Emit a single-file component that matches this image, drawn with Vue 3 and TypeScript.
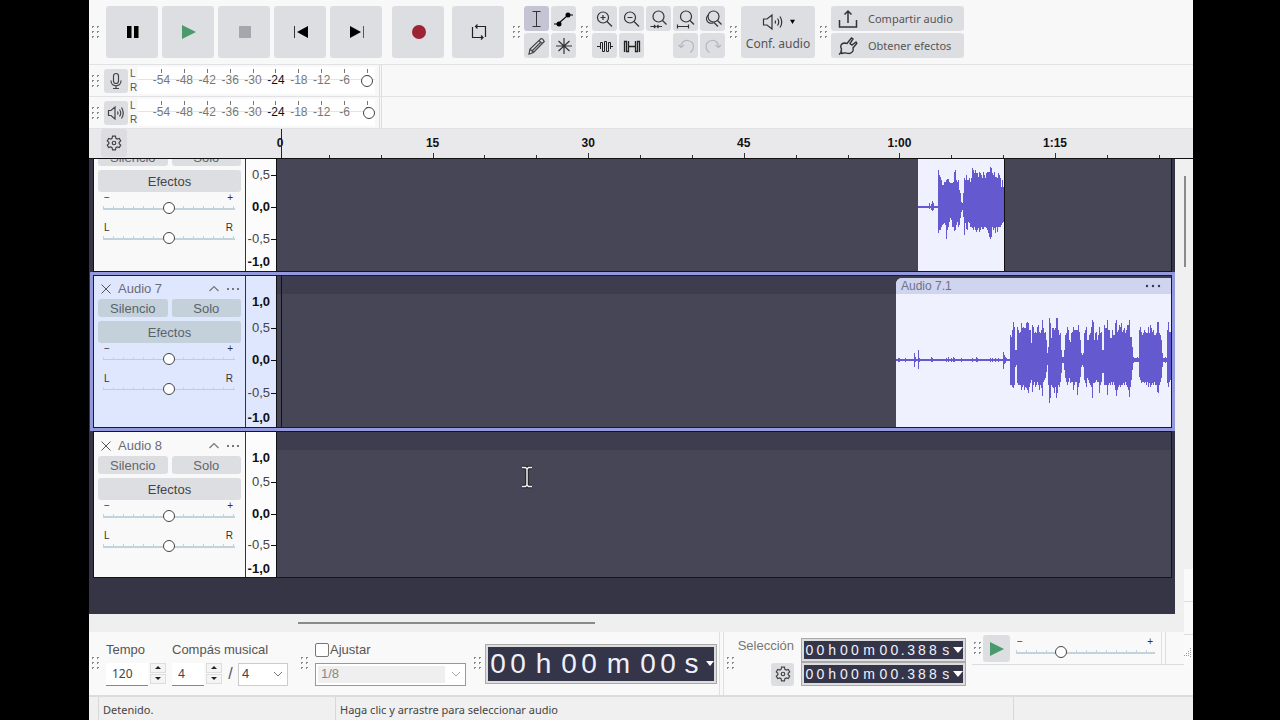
<script setup lang="ts">
import { ref } from 'vue'

type Column = [number, number]
interface Mark { text: string; y: number }
interface Clip {
  start: number
  end: number
  title: string
  center: number
  height: number
  lead: Column[]
  columns: Column[]
  offset: number
}
interface Track {
  id: number
  name: string
  kind: string
  marks: Mark[]
  clip: Clip | null
}

const LANE = 894
const RULER = 916
const PER_MARK = 155.6

const pairs = (s: string): Column[] =>
  s.trim().split(/\s+/).map((p) => p.split('/').map(Number) as Column)

/* Peaks above / below the centre line, in thirds of a pixel, one pair per pixel */
const wave6 = pairs(`111/77 96/69 91/69 81/59 66/54 66/51 76/49 76/54 81/97 83/69 83/59 76/44 71/34 71/39 71/59
76/59 106/72 111/69 81/54 76/44 81/59 51/54 41/34 16/14 11/9 41/29 86/84 81/49 96/67 81/69 81/44 86/49 76/59 86/59
118/64 111/69 101/59 111/69 101/74 101/69 91/64 106/74 101/69 96/59 86/67 106/67 96/59 86/59 101/64 106/69 106/79
106/89 121/97 116/89 101/59 96/69 106/64 91/79 91/59 86/74 101/59 96/59 86/59 61/54 81/49 61/44 21/19`)

const wave7 = pairs(`75/75 70/75 90/80 115/85 100/75 30/20 30/15 100/70 90/75 80/75 85/75 110/90 95/80 100/75 95/90
95/80 112/85 115/90 110/98 90/80 90/70 50/60 105/95 100/75 80/65 85/80 80/75 100/65 105/75 85/90 80/75 90/85 120/108
95/65 80/60 85/55 60/35 20/15 40/75 127/130 110/115 65/75 95/80 95/85 90/100 95/80 125/115 125/100 90/75 75/80 80/65
30/40 10/10 8/8 30/30 75/55 80/65 100/75 90/65 60/55 55/70 80/65 85/65 100/90 90/75 90/65 90/65 90/105 105/80 85/70
60/50 20/20 15/15 20/20 80/60 90/70 100/80 60/55 60/60 75/70 80/75 100/80 120/115 115/70 60/70 80/65 85/60 60/65
75/65 100/100 80/75 85/65 30/40 30/40 105/75 95/75 95/75 120/105 90/75 90/70 65/75 65/65 90/75 75/65 75/75 110/90
120/108 85/90 90/80 105/75 100/80 110/75 85/75 90/70 95/75 80/65 90/75 105/80 105/90 120/110 70/80 70/60 40/30 8/8
5/7 6/6 5/6 8/7 5/6 90/50 100/60 85/70 75/65 80/65 90/70 85/65 80/75 80/65 100/80 80/70 105/80 95/75 85/70 90/75
75/65 75/75 80/75 115/95 115/100 80/75 75/65 60/55 20/20 5/7 5/7 8/8 5/7 90/70 115/80 85/65 85/60`)

const lead6 = pairs('2/2 '.repeat(11) + '12/6 4/4 9/9 18/12 12/10 3/3 2/2 2/2 2/2')

/* Quiet part of the second clip: a thin line with a few named bumps */
const bumps: Record<number, Column> = {
  2: [6, 6], 3: [6, 5], 9: [6, 5], 18: [22, 20], 19: [8, 6], 22: [30, 27], 23: [7, 7], 35: [8, 7], 36: [5, 5],
  50: [7, 6], 52: [8, 7], 55: [7, 7], 57: [9, 7], 58: [6, 6], 65: [6, 5], 76: [6, 5], 80: [8, 7], 81: [6, 6],
  94: [6, 6], 96: [7, 7], 99: [5, 5], 102: [5, 6], 107: [24, 27], 108: [15, 12], 109: [10, 8], 110: [6, 4],
}
const lead7 = Array.from({ length: 114 }, (_, i): Column => bumps[i] ?? [3, 3])

const tracks: Track[] = [
  {
    id: 6, name: 'Audio 6', kind: 'scrolled',
    marks: [{ text: '0,5', y: 16 }, { text: '0,0', y: 48 }, { text: '-0,5', y: 80 }, { text: '-1,0', y: 103 }],
    clip: { start: 641, end: 727, title: '', center: 48, height: 112, lead: lead6, columns: wave6, offset: 20 },
  },
  {
    id: 7, name: 'Audio 7', kind: 'selected',
    marks: [{ text: '1,0', y: 26 }, { text: '0,5', y: 52 }, { text: '0,0', y: 84 }, { text: '-0,5', y: 117 }, { text: '-1,0', y: 142 }],
    clip: { start: 619, end: 894, title: 'Audio 7.1', center: 82, height: 149, lead: lead7, columns: wave7, offset: 114 },
  },
  {
    id: 8, name: 'Audio 8', kind: 'plain',
    marks: [{ text: '1,0', y: 26 }, { text: '0,5', y: 50 }, { text: '0,0', y: 82 }, { text: '-0,5', y: 113 }, { text: '-1,0', y: 137 }],
    clip: null,
  },
]

const wavePath = (c: Clip): string => {
  const mid = c.center * 3
  const draw = (cols: Column[], from: number) =>
    cols.map(([up, down], i) => `M${(from + i) * 3 + 1.5} ${mid - up}V${mid + down}`).join('')
  return draw(c.lead, 0) + draw(c.columns, c.offset)
}

const pct = (v: number, total: number) => `${(v / total) * 100}%`

const labels = ['0', '15', '30', '45', '1:00', '1:15'].map((text, i) => ({
  text, left: pct(i ? i * PER_MARK : 3, RULER),
}))
const ticks = Array.from({ length: 17 }, (_, i) => i + 1).map((i) => ({
  major: i % 3 === 0, left: pct((i * PER_MARK) / 3, RULER),
}))

const decibels = ['-54', '-48', '-42', '-36', '-30', '-24', '-18', '-12', '-6', '0']
const bigTime = ['0', '0', 'h', '0', '0', 'm', '0', '0', 's']
const smallTime = ['0', '0', 'h', '0', '0', 'm', '0', '0', '.', '3', '8', '8', 's']
const cell = (c: string) => (c === '.' ? 'dot' : /\d/.test(c) ? 'num' : 'unit-' + c)

const tempo = ref('120')
const upper = ref('4')
const lower = ref('4')
const snap = ref(false)
const gearTeeth = 'M8.2 1.5h3.6l.6 2.6 1.6.9 2.6-.8 1.8 3.1-2 1.8v1.8l2 1.8-1.8 3.1-2.6-.8-1.6.9-.6 2.6H8.2l-.6-2.6-1.6-.9-2.6.8-1.8-3.1 2-1.8V9.1l-2-1.8 1.8-3.1 2.6.8 1.6-.9z'
</script>

<template>
  <div class="screen">
    <main class="app">
      <header class="toolbar">
        <i class="grip first"></i>
        <div class="transport">
          <button class="big" aria-label="Pausa"><svg width="14" height="14" viewBox="0 0 14 14"><path d="M1 1h4.500v12H1zM8 1h4.500v12H8z" fill="#000" /></svg></button>
          <button class="big" aria-label="Reproducir"><svg width="16" height="16" viewBox="0 0 16 16"><path d="M1 1l14 7-14 7z" fill="#4a9a6c" /></svg></button>
          <button class="big" aria-label="Detener"><svg width="12" height="12" viewBox="0 0 12 12"><path d="M0 0h12v12H0z" fill="#a5a6ae" /></svg></button>
          <button class="big" aria-label="Ir al inicio"><svg width="16" height="14" viewBox="0 0 16 14"><path d="M1.500 1v12" stroke="#333" /><path d="M15 1v12L4 7z" fill="#000" /></svg></button>
          <button class="big" aria-label="Ir al final"><svg width="16" height="14" viewBox="0 0 16 14"><path d="M14.500 1v12" stroke="#555" /><path d="M1 1v12l11-6z" fill="#000" /></svg></button>
          <button class="big record" aria-label="Grabar"><svg width="16" height="16" viewBox="0 0 16 16"><circle cx="8" cy="8" r="7" fill="#9c2434" /></svg></button>
          <button class="big loop" aria-label="Bucle"><svg width="18" height="18" viewBox="0 0 18 18" fill="none" stroke="#222" stroke-width="1.200"><path d="M2.500 4v10.500H13M15.500 14V3.500H5.500M7.500 1.500l-2 2 2 2M11 12.500l2 2-2 2" /></svg></button>
        </div>
        <i class="grip wide"></i>
        <div class="tools two">
          <button class="small on" aria-label="Selección"><svg width="20" height="20" viewBox="0 0 20 20" fill="none" stroke="#333"><path d="M5.500 2.500h8M5.500 17.500h8M9.500 2.500v15" /></svg></button>
          <button class="small" aria-label="Envolvente"><svg width="20" height="20" viewBox="0 0 20 20"><path d="M0 15h4l10-9h5" fill="none" stroke="#000" stroke-width="1.200" /><circle cx="5" cy="15" r="2.500" /><circle cx="14" cy="6" r="2.500" /></svg></button>
          <button class="small" aria-label="Dibujo"><svg width="20" height="20" viewBox="0 0 20 20" fill="none" stroke="#444" stroke-width="1.200"><path d="M2 18l1-5L14 2.500q2 0 3.200 3L6.500 16.500zM12 4.500l3.200 3.200M3 13l3.500 3.500M5.500 14.500l8-8" /></svg></button>
          <button class="small" aria-label="Multiherramienta"><svg width="20" height="20" viewBox="0 0 20 20" fill="none" stroke="#333" stroke-width="1.200"><path d="M10 2v16M2 10h16M4.500 5l11 10M15.500 5l-11 10" /></svg></button>
        </div>
        <i class="grip"></i>
        <div class="tools five">
          <button class="small" aria-label="Acercar"><svg width="20" height="20" viewBox="0 0 20 20" fill="none" stroke="#333" stroke-width="1.200"><circle cx="8" cy="8.500" r="5.500" /><path d="M12 12.500l5 5M5.500 8.500h5M8 6v5" /></svg></button>
          <button class="small" aria-label="Alejar"><svg width="20" height="20" viewBox="0 0 20 20" fill="none" stroke="#333" stroke-width="1.200"><circle cx="8" cy="8.500" r="5.500" /><path d="M12 12.500l5 5M5.500 8.500h5" /></svg></button>
          <button class="small" aria-label="Ajustar selección"><svg width="20" height="20" viewBox="0 0 20 20" fill="none" stroke="#333" stroke-width="1.200"><circle cx="9.500" cy="7.500" r="5.500" /><path d="M13.500 11.500l4 4M1.500 17.500h5M8 17.500h5M5 16l1.500 1.500L5 19M9.500 16L8 17.500 9.500 19" /></svg></button>
          <button class="small" aria-label="Ajustar proyecto"><svg width="20" height="20" viewBox="0 0 20 20" fill="none" stroke="#333" stroke-width="1.200"><circle cx="10" cy="7.500" r="5.500" /><path d="M14 11.500l4 4M1.500 17.500h11M1.500 15.500v4M12.500 15.500v4" /></svg></button>
          <button class="small" aria-label="Alternar zoom"><svg width="20" height="20" viewBox="0 0 20 20" fill="none" stroke="#333" stroke-width="1.200"><circle cx="10.500" cy="7.500" r="5.500" /><path d="M14.500 11.500l4 4M5.500 6a4.500 4.500 0 1 0 5 7.500M11 13.500l4 4" /></svg></button>
          <button class="small" aria-label="Recortar"><svg width="20" height="20" viewBox="0 0 20 20" fill="none" stroke="#222"><path d="M2 10.500h3.500M5.500 13V6.500h2v9h2v-10h2v10h2v-9h2V13M15.500 10.500H18" /></svg></button>
          <button class="small" aria-label="Silenciar selección"><svg width="20" height="20" viewBox="0 0 20 20" fill="none" stroke="#222"><path d="M2.500 16V5.500h2v10h2V5M6.500 10.500h7M13.500 5v10.500h2v-10h2V16" stroke-width="1.300" /></svg></button>
          <span></span>
          <button class="small" aria-label="Deshacer"><svg width="20" height="20" viewBox="0 0 20 20" fill="none" stroke="#b4b5be" stroke-width="1.200"><path d="M5 11.500c-.5-5 3-7.500 7-7 5 .7 6.500 5 5 8.500q-1 2.500-3 3.500M2.500 9L5 11.500 8 9" /></svg></button>
          <button class="small" aria-label="Rehacer"><svg width="20" height="20" viewBox="0 0 20 20" fill="none" stroke="#b4b5be" stroke-width="1.200"><path d="M15.500 11.500c.5-5-3-7.500-7-7-5 .7-6.500 5-5 8.500q1 2.500 3 3.500M18 9l-2.500 2.500L12.500 9" /></svg></button>
        </div>
        <i class="grip"></i>
        <button class="setup">
          <span class="setup-icons">
            <svg width="22" height="18" viewBox="0 0 22 18" fill="none" stroke="#333" stroke-width="1.200"><path d="M1.500 6v6H5l5 4V2L5 6zM13 7.500q1 1.500 0 3M15.500 5.500q2.500 3.500 0 7M18 3.500q3.500 5.500 0 11" /></svg>
            <svg width="5" height="5" viewBox="0 0 6 6"><path d="M0 1h6L3 6z" /></svg>
          </span>
          <span>Conf. audio</span>
        </button>
        <i class="grip"></i>
        <div class="cloud">
          <button class="wide-btn"><svg width="20" height="20" viewBox="0 0 20 20" fill="none" stroke="#333" stroke-width="1.500"><path d="M1.500 11v7h17v-7M10 14V2M6.500 5.500L10 2l3.500 3.500" /></svg><span>Compartir audio</span></button>
          <button class="wide-btn"><svg width="20" height="20" viewBox="0 0 20 20" fill="none" stroke="#333" stroke-width="1.400"><path d="M1 18.500l3-3M3.500 17.500c-1.500-2 0-3 0-4.500-2-3 0-6 3-6l2.500.500 4.500-5.500 1.500 1-3 4.500 2 1.500 4-3 .8 1.500-3.800 4.500c1 3-1 5-3.500 5.500-3 0-4-1-5.500-.5z" /></svg><span>Obtener efectos</span></button>
        </div>
      </header>

      <div v-for="m in ['rec', 'play']" :key="m" class="meter-row">
        <i class="grip meter-grip"></i>
        <button class="meter-btn" :aria-label="m === 'rec' ? 'Nivel de grabación' : 'Nivel de reproducción'">
          <svg v-if="m === 'rec'" width="18" height="18" viewBox="0 0 18 18" fill="none" stroke="#444" stroke-width="1.200"><rect x="6.500" y="1.500" width="5" height="10" rx="2.500" /><path d="M4 8.500c0 7 10 7 10 0M9 14v3M6 16.500h6" /></svg>
          <svg v-else width="18" height="18" viewBox="0 0 18 18" fill="none" stroke="#444" stroke-width="1.200"><path d="M1.500 6.500v5h2.500l4 3.500V3L4 6.500zM10.500 7.500q1 1.500 0 3M12.500 5.500q2.500 3.500 0 7M14.500 3.500q3.500 5.500 0 11" /></svg>
        </button>
        <span class="channels"><span>L</span><span>R</span></span>
        <div class="meter">
          <div class="scale"><span v-for="d in decibels" :key="d" :class="{ strong: d === '-24' }">{{ d }}</span></div>
          <input class="meter-slider" type="range" :value="m === 'rec' ? 99 : 100" :aria-label="'Volumen ' + m">
        </div>
      </div>

      <div class="ruler">
        <div class="ruler-head"><button class="ruler-btn" aria-label="Opciones de línea de tiempo"><svg width="16" height="16" viewBox="0 0 20 20" fill="none" stroke="#444" stroke-width="1.500"><path :d="gearTeeth" /><circle cx="10" cy="10" r="2.200" /></svg></button></div>
        <div class="ruler-lane">
          <span v-for="l in labels" :key="l.text" class="time" :style="{ left: l.left }">{{ l.text }}</span>
          <i v-for="(t, i) in ticks" :key="i" class="tick" :class="{ major: t.major }" :style="{ left: t.left }"></i>
          <i class="playhead"></i>
        </div>
      </div>

      <div class="workspace">
        <div class="tracks">
          <section v-for="t in tracks" :key="t.id" class="track" :class="t.kind">
            <div class="panel">
              <div class="panel-body">
                <div class="panel-head">
                  <button aria-label="Cerrar pista"><svg width="12" height="12" viewBox="0 0 12 12" fill="none" stroke="#555"><path d="M1.500 1.500l9 9M10.500 1.500l-9 9" /></svg></button>
                  <span class="name">{{ t.name }}</span>
                  <button aria-label="Contraer"><svg width="12" height="12" viewBox="0 0 12 12" fill="none" stroke="#777" stroke-width="1.200"><path d="M1.500 8L6 3.500 10.500 8" /></svg></button>
                  <button aria-label="Menú"><svg width="14" height="12" viewBox="0 0 14 12" fill="#777"><path d="M1 5h2v2H1zM6 5h2v2H6zM11 5h2v2h-2z" /></svg></button>
                </div>
                <div class="pair"><button>Silencio</button><button>Solo</button></div>
                <button class="effects">Efectos</button>
                <div class="knob gain"><div class="ends"><span>−</span><span>+</span></div><input type="range" value="50" :aria-label="'Ganancia ' + t.name"></div>
                <div class="knob pan"><div class="ends"><span>L</span><span>R</span></div><input type="range" value="50" :aria-label="'Panorama ' + t.name"></div>
              </div>
            </div>
            <div class="amp">
              <span v-for="m in t.marks" :key="m.text" class="mark" :class="{ bold: !m.text.endsWith('5'), tickless: m.text.endsWith('1,0') }" :style="{ top: m.y + 'px' }">{{ m.text }}</span>
            </div>
            <div class="lane">
              <div v-if="t.clip" class="clip" :class="{ titled: t.clip.title }" :style="{ left: pct(t.clip.start, LANE), width: pct(t.clip.end - t.clip.start, LANE) }">
                <div v-if="t.clip.title" class="clip-head"><span>{{ t.clip.title }}</span><button aria-label="Menú del clip"><svg width="16" height="4" viewBox="0 0 16 4" fill="#333a5c"><circle cx="2" cy="2" r="1.200" /><circle cx="8" cy="2" r="1.200" /><circle cx="14" cy="2" r="1.200" /></svg></button></div>
                <svg class="wave" :viewBox="`0 0 ${(t.clip.end - t.clip.start) * 3} ${t.clip.height * 3}`" preserveAspectRatio="none"><path :d="wavePath(t.clip)" /></svg>
              </div>
              <svg v-if="t.id === 8" class="cursor" width="14" height="24" viewBox="0 0 14 24" fill="none"><path d="M2 2.500h3.500L7 4l1.500-1.500H12M2 21.500h3.500L7 20l1.500 1.500H12M7 4v16" stroke="#222" stroke-width="3.500" /><path d="M2 2.500h3.500L7 4l1.500-1.500H12M2 21.500h3.500L7 20l1.500 1.500H12M7 4v16" stroke="#f4f4f4" stroke-width="1.500" /></svg>
            </div>
          </section>
        </div>
        <div class="vscroll"><i></i></div>
      </div>
      <div class="hscroll"><i></i></div>

      <footer class="bottom">
        <i class="grip first"></i>
        <div class="field tempo">
          <label for="tempo">Tempo</label>
          <div class="line">
            <input id="tempo" v-model="tempo" type="text">
            <span class="spin"><button aria-label="Subir tempo"><i class="up"></i></button><button aria-label="Bajar tempo"><i class="down"></i></button></span>
          </div>
        </div>
        <div class="field signature">
          <label for="upper">Compás musical</label>
          <div class="line">
            <input id="upper" v-model="upper" type="text">
            <span class="spin"><button aria-label="Subir compás"><i class="up"></i></button><button aria-label="Bajar compás"><i class="down"></i></button></span>
            <span class="slash">/</span>
            <span class="drop"><select v-model="lower" aria-label="Denominador"><option>4</option></select><svg width="10" height="6" viewBox="0 0 10 6" fill="none" stroke="#777"><path d="M1 1l4 4 4-4" /></svg></span>
          </div>
        </div>
        <i class="grip snap-grip"></i>
        <div class="field snap">
          <label class="check"><input v-model="snap" type="checkbox">Ajustar</label>
          <span class="drop long"><select aria-label="Ajustar a" disabled><option>1/8</option></select><svg width="10" height="6" viewBox="0 0 10 6" fill="none" stroke="#aaa"><path d="M1 1l4 4 4-4" /></svg></span>
        </div>
        <i class="grip time-grip"></i>
        <div class="clock large"><div class="digits"><span v-for="(c, i) in bigTime" :key="i" :class="cell(c)">{{ c }}</span><button aria-label="Formato de tiempo"><i></i></button></div></div>
        <i class="rails"></i>
        <i class="grip near"></i>
        <div class="selection">
          <span>Selección</span>
          <button aria-label="Opciones de selección"><svg width="16" height="16" viewBox="0 0 20 20" fill="none" stroke="#444" stroke-width="1.500"><path :d="gearTeeth" /><circle cx="10" cy="10" r="2.200" /></svg></button>
        </div>
        <div class="clocks">
          <div v-for="n in 2" :key="n" class="clock"><div class="digits"><span v-for="(c, i) in smallTime" :key="i" :class="cell(c)">{{ c }}</span><button aria-label="Formato de selección"><i></i></button></div></div>
        </div>
        <div class="speed">
          <i class="grip speed-grip"></i>
          <button class="speed-play" aria-label="Reproducir a velocidad"><svg width="16" height="16" viewBox="0 0 16 16"><path d="M1 1l14 7-14 7z" fill="#4a9a6c" /></svg></button>
          <div class="knob speed-knob"><div class="ends"><span>−</span><span>+</span></div><input type="range" value="31" aria-label="Velocidad"></div>
          <i class="rails"></i>
        </div>
      </footer>

      <div class="status"><span class="state">Detenido.</span><span class="hint">Haga clic y arrastre para seleccionar audio</span><span class="tail"></span></div>
      <div class="edge"><i></i><i></i><svg width="9" height="10" viewBox="0 0 9 10" fill="none" stroke="#999"><path d="M.5 8v2M2.500 6v4M4.500 4v6M6.500 1v9" stroke-dasharray="1 1" /></svg></div>
    </main>
  </div>
</template>

<style>
body { margin: 0; background: #000; }
</style>

<style scoped>
* { box-sizing: border-box; }
.screen { display: flex; min-height: 100vh; padding: 0 87px 0 89px; background: #000; font: 13px/16px "Liberation Sans", Arial, sans-serif; color: #555; }
.app { position: relative; display: flex; flex-direction: column; flex: 1; min-width: 0; background: #f8f8f8; overflow: hidden; }
button { display: flex; align-items: center; justify-content: center; margin: 0; padding: 0; border: 0; border-radius: 3px; background: #dddee2; font: inherit; color: inherit; }
svg { display: block; flex: none; }
.grip { flex: none; width: 16px; height: 16px; background: radial-gradient(circle, #888 0 1px, transparent 1px) 3px 0 / 5px 5px; clip-path: inset(0 3px 1px 3px); }
.grip.first, .grip.meter-grip, .grip.near { background-position-x: 1px; clip-path: inset(0 6px 1px 1px); }
.grip.first { width: 17px; }
.grip.wide { width: 20px; background-position-x: 7px; clip-path: inset(0 3px 1px 7px); }

.toolbar { display: flex; align-items: center; height: 65px; border-bottom: 1px solid #e2e2e4; }
.transport { display: flex; gap: 4px; }
.big { width: 52px; height: 52px; padding-left: 1px; }
.record { margin-left: 6px; }
.loop { margin-left: 4px; }
.tools { display: grid; gap: 2px; grid-auto-rows: 25px; }
.two { grid-template-columns: repeat(2, 25px); }
.five { grid-template-columns: repeat(5, 25px); }
.small.on { background: #c5c4d4; }
.setup { flex-direction: column; gap: 5px; width: 74px; height: 52px; font: 12px/16px "Noto Sans", sans-serif; }
.setup-icons { display: flex; align-items: center; gap: 6px; }
.cloud { display: grid; gap: 2px; grid-template: 25px 25px / 133px; font: 11px/16px "Noto Sans", sans-serif; }
.wide-btn { justify-content: flex-start; padding-left: 7px; gap: 10px; }

.meter-row { display: flex; align-items: center; height: 32px; border-bottom: 1px solid #e2e2e4; }
.grip.meter-grip { width: 15px; clip-path: inset(0 5px 1px 1px); }
.meter-btn { width: 24px; height: 24px; }
.channels { display: flex; flex-direction: column; width: 10px; padding-left: 2px; font-size: 10px; line-height: 14px; }
.meter { display: grid; align-items: center; width: 244px; height: 31px; border-right: 3px double #ddd; background: linear-gradient(#e4e4e4, #e4e4e4) 0 14px / 237px 1px no-repeat, linear-gradient(#fff, #fff) 0 2px / 237px 27px no-repeat; }
.scale, .meter-slider { grid-area: 1 / 1; }
.scale { display: grid; grid-template-columns: repeat(10, 1fr); padding: 2px 0 0 12px; width: 241px; height: 27px; font-size: 12px; line-height: 23px; text-align: center; color: #777; }
.scale span { background: linear-gradient(#777, #777) 50% 0 / 1px 4px no-repeat; }
.scale .strong { color: #111; }
.meter-slider { justify-self: end; width: 226px; margin: 0 4px 0 0; transform: none; }

.ruler { display: flex; height: 30px; background: #e9e9eb; border-bottom: 1px solid #111; }
.ruler-head { width: 188px; padding-left: 12px; }
.ruler-btn { width: 26px; height: 28px; background: #dcdce1; }
.ruler-lane { position: relative; flex: 1; }
.time { position: absolute; top: 6px; transform: translateX(-50%); font-weight: bold; font-size: 12px; color: #111; }
.tick { position: absolute; bottom: 0; width: 1px; height: 3px; background: #333; }
.tick.major { height: 5px; }
.playhead { position: absolute; left: 4px; top: 0; bottom: 0; width: 1px; background: #222; }

.workspace { display: flex; flex: 1; }
.tracks { display: flex; flex-direction: column; gap: 3px; flex: 1; padding: 0 3px 0 4px; background: #353545; }
.track { display: flex; border: 1px solid #14141f; }
.scrolled { height: 113px; border-top: 0; overflow: hidden; }
.selected { height: 153px; outline: 3px solid #9499dd; border-color: #16164a; }
.plain { height: 147px; }
.panel { display: flex; align-items: flex-end; width: 152px; padding: 0 4px; background: #f9f9fa; border-right: 1px solid #333; overflow: hidden; }
.plain .panel { padding-top: 1px; }
.panel-body { display: flex; flex-direction: column; flex: 1; height: 100%; min-height: 146px; }
.plain .panel-body { min-height: 0; }
.selected .panel, .selected .amp { background: #dfe7fe; }
.panel-head { display: flex; align-items: center; gap: 6px; height: 23px; padding: 2px 1px 0 2px; }
.panel-head button { background: none; }
.name { flex: 1; color: #6c6c74; }
.pair { display: grid; grid-template-columns: 1fr 1fr; gap: 4px; height: 18px; }
.pair button { padding-top: 2px; color: #666; line-height: 16px; }
.effects { height: 22px; margin-top: 4px; padding-top: 1px; color: #444; }
.selected .panel-body > .effects, .selected .pair button { background: #c4d1da; color: #59636e; }
.knob { display: flex; flex-direction: column; padding: 0 6px 0 5px; }
.gain { margin-top: 2px; }
.pan { margin-top: 10px; }
.ends { display: flex; justify-content: space-between; padding: 0 2px 0 1px; font-size: 10px; line-height: 8px; color: #333; }
input[type=range] { appearance: none; height: 12px; margin: 0; background: none; }
.knob input { width: 100%; background: linear-gradient(#c3d3dd, #c3d3dd) 0 6px / 100% 2px no-repeat, linear-gradient(90deg, #c3d3dd 1px, transparent 1px) 0 4px / 10px 3px repeat-x; }
.selected .knob input { background: linear-gradient(#c3cada, #c3cada) 0 6px / 100% 1px no-repeat, linear-gradient(90deg, #cdd4e4 1px, transparent 1px) 0 4px / 10px 2px repeat-x; }
input[type=range]::-webkit-slider-thumb { appearance: none; width: 12px; height: 12px; border: 1px solid #444; border-radius: 50%; background: #fff; }
.meter-slider { margin-right: 6px; padding-right: 4px; }
.meter-slider::-webkit-slider-thumb { background: transparent; }
.amp { position: relative; width: 31px; background: #fcfcfc; border-right: 1px solid #111; overflow: hidden; }
.mark { position: absolute; right: 0; padding-right: 6px; transform: translateY(-50%); line-height: 14px; color: #444; background: linear-gradient(#111, #111) 100% 50% / 5px 1px no-repeat; }
.mark.bold { font-weight: bold; color: #111; }
.mark.tickless { background: none; }
.lane { position: relative; flex: 1; background: #464657; }
.plain .lane, .selected .lane { background: linear-gradient(#3d3d4f, #3d3d4f) 0 0 / 100% 18px no-repeat, #464657; }
.selected .lane::before { content: ""; position: absolute; left: 4px; top: 0; bottom: 0; width: 1px; background: #111; }
.clip { position: absolute; top: 0; bottom: 0; background: #f0f1ff; box-shadow: 1px 0 #111; }
.titled { top: 2px; box-shadow: none; border-radius: 6px 0 0 0; overflow: hidden; }
.clip-head { display: flex; justify-content: space-between; align-items: center; width: 100%; height: 16px; padding: 0 10px 0 5px; background: #cfd4ef; font-size: 12px; color: #6f7187; }
.clip-head button { background: none; }
.wave { position: absolute; left: 0; top: 0; width: 100%; height: 100%; }
.wave path { stroke: #6459cf; stroke-width: 3; shape-rendering: crispEdges; }
.cursor { position: absolute; left: 27.2%; top: 33px; }
.vscroll { width: 18px; padding: 17px 0 0 9px; background: #f0f0f0; }
.vscroll i { display: block; width: 2px; height: 91px; background: #8a8a8a; }
.hscroll { height: 18px; padding: 8px 0 0 209px; background: #efefef; }
.hscroll i { display: block; width: 297px; height: 2px; background: #8a8a8a; }

.bottom { display: flex; align-items: center; height: 65px; background: #f9f9f9; border-bottom: 2px solid #dcdcdc; }
.bottom > .grip { margin-bottom: 2px; }
.field { display: flex; flex-direction: column; gap: 5px; height: 44px; }
.field label { height: 16px; }
.line { display: flex; height: 23px; }
.tempo { width: 66px; }
.signature { width: 116px; }
.line input { width: 42px; padding: 0 6px; border: 0; border-bottom: 1px solid #888; background: #fff; font: 12px/20px "Noto Sans", sans-serif; color: #444; }
.signature .line input { width: 32px; }
.spin { display: grid; grid-template: 10px 10px / 16px; gap: 1px; margin-left: 2px; margin-right: 1px; }
.spin button { border: 1px solid #ddd; border-radius: 0; background: #f4f4f4; }
.up, .down { border: 3px solid transparent; }
.up { border-top: 0; border-bottom-color: #222; }
.down { border-bottom: 0; border-top-color: #222; }
.slash { width: 15px; text-align: center; font-size: 16px; line-height: 22px; }
.drop { display: flex; align-items: center; width: 50px; height: 23px; border: 1px solid #ccc; background: #fff; padding-right: 4px; }
select { appearance: none; flex: 1; min-width: 0; height: 19px; padding: 0 0 0 3px; border: 0; background: none; font: inherit; color: #444; }
.long { width: 151px; border-color: #999; padding-left: 2px; }
.long select { height: 17px; margin-right: 6px; background: #efefef; color: #888; opacity: 1; }
.bottom > .snap-grip { margin-left: 8px; margin-right: 3px; }
.check { display: flex; align-items: center; gap: 1px; }
.check input { appearance: none; width: 14px; height: 14px; margin: 0; border: 1px solid #777; border-radius: 2px; background: #fff; }
.bottom > .time-grip { margin-left: 3px; }
.clock { padding: 2px; border: 1px solid #aaa; background: #ddd; }
.digits { display: flex; align-items: center; height: 18px; background: #35354a; color: #f0f0fb; font-size: 14px; text-align: center; }
.digits button { background: none; flex: 1; }
.digits button i { border: 5px solid transparent; border-top: 6px solid #fff; border-bottom: 0; }
.num { width: 11px; }
.dot { width: 6px; }
.unit-h { width: 13px; }
.unit-m { width: 18px; }
.unit-s { width: 15px; }
.clocks { display: flex; flex-direction: column; width: 165px; margin-bottom: 3px; }
.large { width: 232px; }
.large .digits { height: 34px; font-size: 28px; line-height: 36px; }
.large .num { width: 20px; }
.large .unit-h { width: 31px; }
.large .unit-m { width: 39px; }
.large .unit-s { width: 27px; }
.large .digits button i { border-width: 5px 4px 0; }
.rails { width: 5px; height: 63px; margin-left: 2px; border: solid #e0e0e0; border-width: 0 1px; }
.selection { display: flex; flex-direction: column; align-items: flex-end; justify-content: space-between; width: 54px; height: 48px; margin: 0 7px 4px 0; color: #777; }
.selection button { width: 23px; height: 23px; }
.speed { display: flex; flex: 1; align-self: flex-start; height: 33px; margin: 0 9px 0 6px; border-bottom: 1px solid #ddd; }
.speed-grip { width: 11px; margin-top: 8px; background-position-x: 0; clip-path: inset(0 1px 1px 0); }
.speed-play { width: 27px; height: 27px; margin-top: 3px; }
.speed-knob { width: 145px; padding: 6px 0 0 6px; }
.speed .rails { height: 32px; margin-left: 6px; }
.status { display: flex; height: 23px; background: #f0f0f0; font: 11px/26px "Noto Sans", sans-serif; color: #444; }
.status span { padding-left: 4px; border-left: 1px solid #d8d8d8; }
.state { width: 237px; margin-left: 9px; }
.hint { flex: 1; }
.status .tail { width: 180px; }
.edge { position: absolute; right: 0; top: 569px; width: 9px; height: 98px; background: #fafafa; }
.edge i { display: block; height: 33px; border-bottom: 1px solid #ddd; }
.edge svg { margin-top: 12px; }
</style>
